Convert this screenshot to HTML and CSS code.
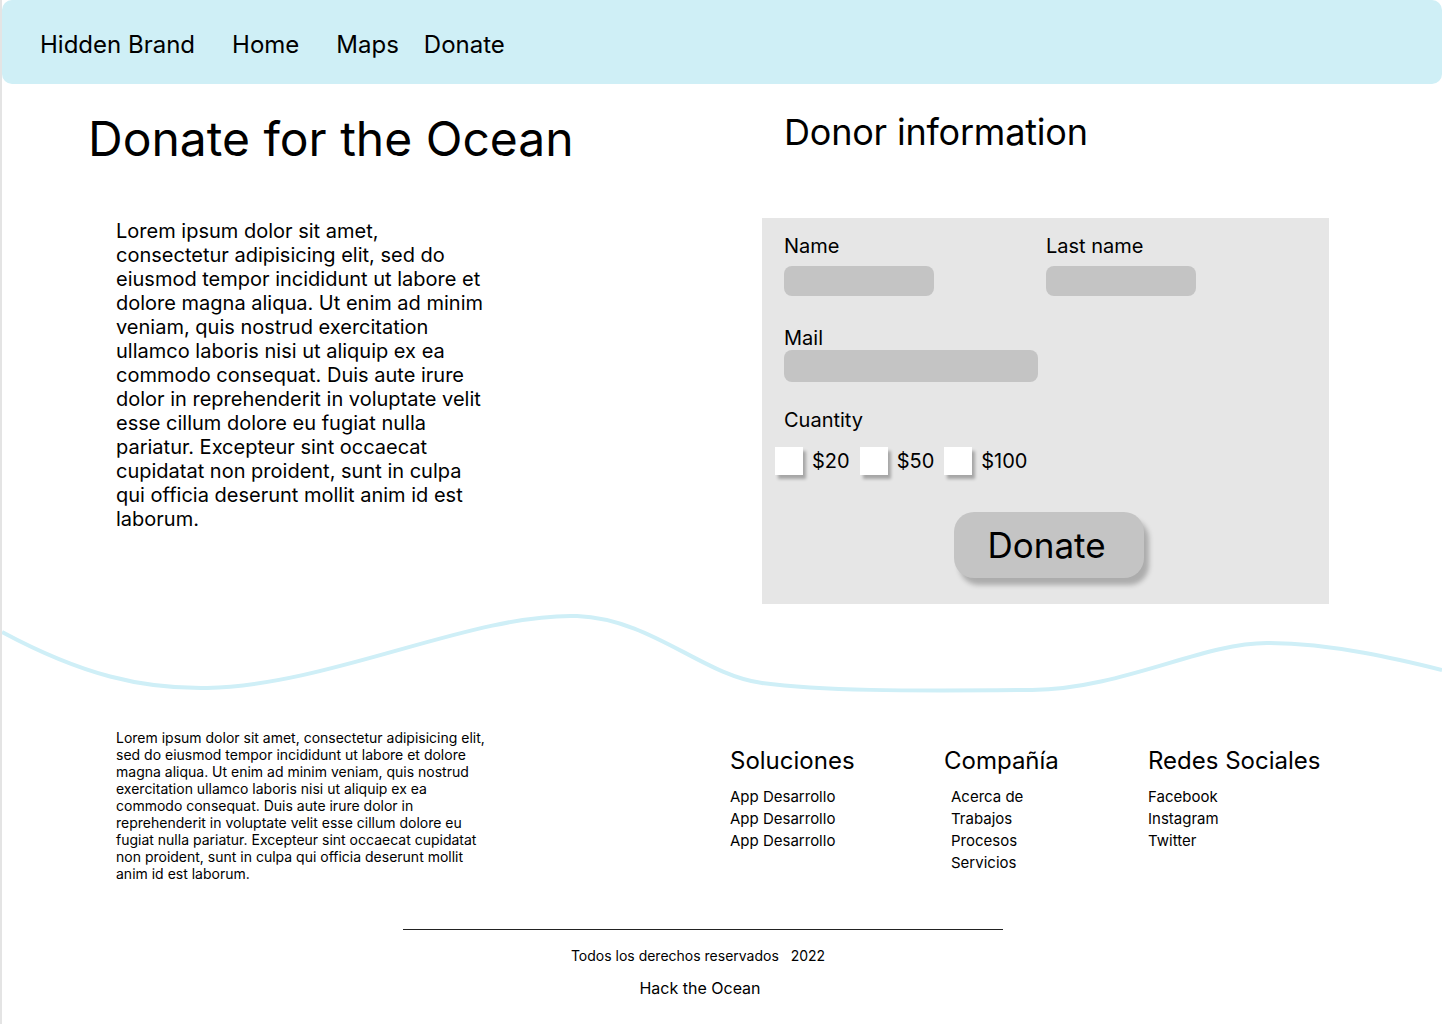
FILE: index.html
```html
<!DOCTYPE html>
<html lang="en">
<head>
<meta charset="utf-8">
<title>Donate for the Ocean</title>
<link rel="stylesheet" href="styles.css">
</head>
<body>
<div class="page">
  <nav class="navbar">
    <span class="brand">Hidden Brand</span>
    <a class="nav-link nav-home" href="#">Home</a>
    <a class="nav-link nav-maps" href="#">Maps</a>
    <a class="nav-link" href="#">Donate</a>
  </nav>

  <main class="main">
    <section class="intro">
      <h1 class="title">Donate for the Ocean</h1>
      <p class="intro-text">Lorem ipsum dolor sit amet, consectetur adipisicing elit, sed do eiusmod tempor incididunt ut labore et dolore magna aliqua. Ut enim ad minim veniam, quis nostrud exercitation ullamco laboris nisi ut aliquip ex ea commodo consequat. Duis aute irure dolor in reprehenderit in voluptate velit esse cillum dolore eu fugiat nulla pariatur. Excepteur sint occaecat cupidatat non proident, sunt in culpa qui officia deserunt mollit anim id est laborum.</p>
    </section>

    <section class="donor">
      <h2 class="donor-title">Donor information</h2>
      <form class="donor-form">
        <div class="name-row">
          <div class="field">
            <label class="label">Name</label>
            <div class="input input-short"></div>
          </div>
          <div class="field">
            <label class="label">Last name</label>
            <div class="input input-short"></div>
          </div>
        </div>
        <div class="field field-mail">
          <label class="label">Mail</label>
          <div class="input input-mail"></div>
        </div>
        <div class="field field-qty">
          <label class="label">Cuantity</label>
          <div class="options">
            <span class="check"></span><span class="amount">$20</span>
            <span class="check"></span><span class="amount">$50</span>
            <span class="check"></span><span class="amount">$100</span>
          </div>
        </div>
        <div class="button-row">
          <button type="button" class="donate-btn">Donate</button>
        </div>
      </form>
    </section>
  </main>

  <div class="wave">
    <svg width="1440" height="110" viewBox="0 0 1440 110" xmlns="http://www.w3.org/2000/svg">
      <path d="M0,27 C80,70 140,84 205,83 C330,80 470,8 575,11 C650,14 700,70 760,78 C820,86 900,86 1030,85 C1120,84 1200,38 1265,38 C1330,38 1400,55 1440,65" fill="none" stroke="#cfeff7" stroke-width="4"/>
    </svg>
  </div>

  <footer class="footer">
    <div class="footer-top">
      <p class="footer-text">Lorem ipsum dolor sit amet, consectetur adipisicing elit, sed do eiusmod tempor incididunt ut labore et dolore magna aliqua. Ut enim ad minim veniam, quis nostrud exercitation ullamco laboris nisi ut aliquip ex ea commodo consequat. Duis aute irure dolor in reprehenderit in voluptate velit esse cillum dolore eu fugiat nulla pariatur. Excepteur sint occaecat cupidatat non proident, sunt in culpa qui officia deserunt mollit anim id est laborum.</p>
      <div class="footer-cols">
        <div class="col col-1">
          <h3 class="col-title">Soluciones</h3>
          <ul class="col-list">
            <li>App Desarrollo</li>
            <li>App Desarrollo</li>
            <li>App Desarrollo</li>
          </ul>
        </div>
        <div class="col col-2">
          <h3 class="col-title">Compañía</h3>
          <ul class="col-list col-list-indent">
            <li>Acerca de</li>
            <li>Trabajos</li>
            <li>Procesos</li>
            <li>Servicios</li>
          </ul>
        </div>
        <div class="col col-3">
          <h3 class="col-title">Redes Sociales</h3>
          <ul class="col-list">
            <li>Facebook</li>
            <li>Instagram</li>
            <li>Twitter</li>
          </ul>
        </div>
      </div>
    </div>
    <div class="footer-bottom">
      <hr class="divider">
      <p class="rights">Todos los derechos reservados &nbsp; 2022</p>
      <p class="hack">Hack the Ocean</p>
    </div>
  </footer>
</div>
</body>
</html>
```

FILE: styles.css
```css
* { box-sizing: border-box; }

html, body {
  margin: 0;
  padding: 0;
  background: #ffffff;
}

body {
  font-family: "Inter", "Noto Sans", "Liberation Sans", sans-serif;
  color: #000;
}

.page {
  width: 1442px;
  min-height: 1024px;
  border-left: 2px solid #e4e4e4;
}

/* NAVBAR */
.navbar {
  height: 84px;
  background: #cfeff6;
  border-radius: 10px;
  display: flex;
  align-items: center;
  padding: 5px 0 0 38px;
  font-size: 24px;
  line-height: 29px;
}

.brand { margin-right: 37px; }

.nav-link {
  color: #000;
  text-decoration: none;
}

.nav-home { margin-right: 37px; }
.nav-maps { margin-right: 25px; }

/* MAIN */
.main {
  display: grid;
  grid-template-columns: 760px 567px;
}

.title {
  margin: 26px 0 0 86px;
  font-size: 48px;
  font-weight: 400;
  line-height: 58px;
}

.intro-text {
  margin: 51px 0 0 114px;
  width: 372px;
  font-size: 20px;
  line-height: 24px;
}

.donor-title {
  margin: 26px 0 0 22px;
  font-size: 36px;
  font-weight: 400;
  line-height: 44px;
  letter-spacing: -0.2px;
}

.donor-form {
  margin-top: 64px;
  height: 386px;
  background: #e6e6e6;
  padding: 16px 22px 0 22px;
}

.name-row {
  display: grid;
  grid-template-columns: 262px 262px;
}

.label {
  display: block;
  font-size: 20px;
  line-height: 24px;
}

.input {
  background: #c4c4c4;
  border-radius: 8px;
}

.input-short {
  margin-top: 8px;
  width: 150px;
  height: 30px;
}

.field-mail { margin-top: 30px; }

.input-mail {
  width: 254px;
  height: 32px;
}

.field-qty { margin-top: 26px; }

.options {
  display: flex;
  align-items: center;
  margin: 15px 0 0 -9px;
  font-size: 20px;
  line-height: 24px;
}

.check {
  width: 28px;
  height: 28px;
  background: #fff;
  box-shadow: 3px 4px 3px rgba(0, 0, 0, 0.28);
  margin-right: 9px;
}

.amount { margin-right: 10px; }

.button-row {
  display: flex;
  justify-content: center;
  margin-top: 37px;
  padding-left: 6px;
}

.donate-btn {
  width: 190px;
  height: 66px;
  border: none;
  border-radius: 20px;
  background: #c4c4c4;
  box-shadow: 5px 7px 5px rgba(0, 0, 0, 0.25);
  font-family: inherit;
  font-size: 35px;
  color: #000;
  padding: 0 4px 0 0;
}

/* WAVE */
.wave {
  height: 110px;
  margin-top: 1px;
}

.wave svg { display: block; }

/* FOOTER */
.footer-top {
  display: flex;
  margin-top: 14px;
}

.footer-text {
  margin: 0 0 0 114px;
  width: 372px;
  font-size: 14px;
  line-height: 17px;
}

.footer-cols {
  display: flex;
  margin-left: 242px;
  margin-top: 17px;
}

.col-1 { width: 214px; }
.col-2 { width: 204px; }

.col-title {
  margin: 0;
  font-size: 24px;
  font-weight: 400;
  line-height: 29px;
}

.col-list {
  list-style: none;
  margin: 11px 0 0 0;
  padding: 0;
  font-size: 15px;
  line-height: 22px;
}

.col-list-indent { padding-left: 7px; }

.footer-bottom {
  width: 600px;
  margin: 47px 0 0 401px;
  text-align: center;
}

.divider {
  margin: 0;
  border: none;
  border-top: 1px solid #222;
  height: 0;
}

.rights {
  margin: 17px 0 0 0;
  font-size: 14px;
  line-height: 17px;
  padding-right: 10px;
}

.hack {
  margin: 14px 0 0 0;
  font-size: 16px;
  line-height: 20px;
  padding-right: 6px;
}
```
